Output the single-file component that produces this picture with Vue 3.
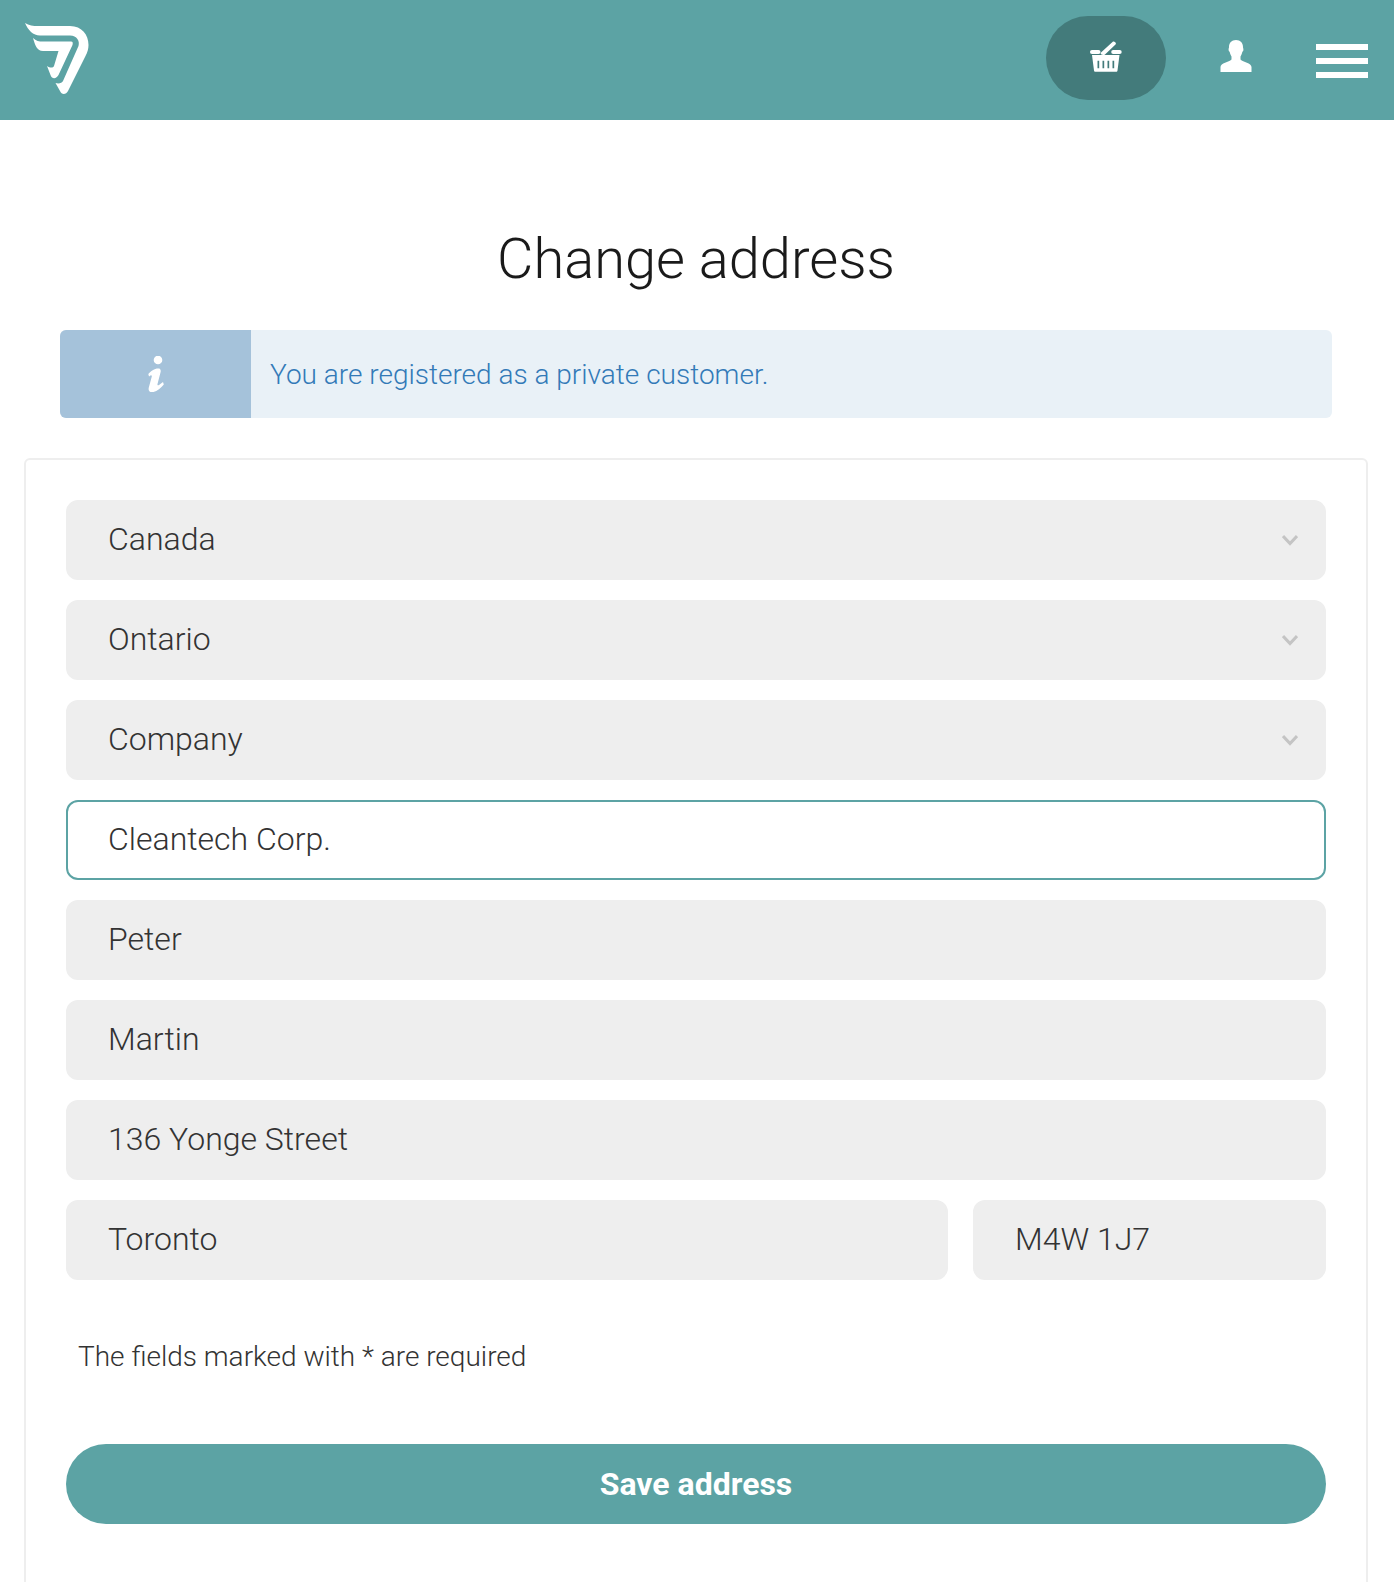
<template>
  <div class="page">
    <header class="topbar">
      <a class="logo" href="#" aria-label="Home">
        <svg width="64" height="72" viewBox="25 23 64 72">
          <path d="M25 23C29 25.500 33 26 38 26L70 26C82 26 88.500 35 88.500 45C88.500 49 87.500 52 85.500 56L68 91C66 95 61.500 95 60 91L55.500 83C59 84 62 83 63 81L78.500 46C80 41 77 35.500 70 35.500L40 35.500C33 35.500 28 30 25 23Z" />
          <path d="M33 38C36 41 39 41.500 43 41.500L71 41.500C73 41.500 73 43 72.500 45L58.500 75C56.500 79 52 79.500 50.500 75L47 66C50 68 53 68 54 66L58.500 51L43 51C37 51 35 45 33 38Z" />
        </svg>
      </a>
      <div class="actions">
        <button class="basket" aria-label="Basket">
          <svg width="32" height="31" viewBox="0 0 32 31">
            <path d="M11 11.500L22.500 1C24 -.5 27 2 25.500 3.500L15 13.500C13 15 9.500 13 11 11.500Z" />
            <rect x="0" y="9" width="10.500" height="4" rx="2" />
            <rect x="21.200" y="9" width="10.500" height="4" rx="2" />
            <path fill-rule="evenodd" d="M2 14L29.500 14L27.500 29.500C27.400 30.300 27 30.800 26 30.800L5.500 30.800C4.600 30.800 4.100 30.300 4 29.500ZM7.500 19.700L7.500 27.300L9.200 27.300L9.200 19.700ZM12.500 19.700L12.500 27.300L14.200 27.300L14.200 19.700ZM17.500 19.700L17.500 27.300L19.200 27.300L19.200 19.700ZM22.500 19.700L22.500 27.300L24.200 27.300L24.200 19.700Z" />
          </svg>
        </button>
        <button class="user" aria-label="Account">
          <svg width="32" height="32" viewBox="0 0 32 32">
            <path d="M16 0C20.500 0 23 3 23 7C23 8 23.500 8.500 23.400 10C23.300 11 22.700 11.500 22.300 12C21.800 14 21 15.500 20.500 16.500L20.500 19.500C23 22 31.500 23 31.500 27L31.500 32L.5 32L.5 27C.5 23 9 22 11.500 19.500L11.500 16.500C11 15.500 10.200 14 9.700 12C9.300 11.500 8.700 11 8.600 10C8.500 8.500 9 8 9 7C9 3 11.500 0 16 0Z" />
          </svg>
        </button>
        <button class="menu" aria-label="Menu">
          <span></span><span></span><span></span>
        </button>
      </div>
    </header>

    <main>
      <h1>Change address</h1>

      <div class="notice">
        <div class="notice-icon">
          <svg width="16" height="36" viewBox="0 0 16 36">
            <circle cx="10" cy="4" r="4.300" />
            <path d="M.3 18C3 15 7 12 11 12.500C12.800 12.800 13 15 12.500 16.500L9.500 28C9.200 29.500 10.300 29.500 11 29L15 26L15.800 28.500C12.500 32.500 8 36.200 3.800 36.200C1 36.200 .2 34 .8 31.500L3.800 20.500C4 19.500 3.200 19 2.500 19.500L1 20.500Z" />
          </svg>
        </div>
        <p>You are registered as a private customer.</p>
      </div>

      <form class="card" @submit.prevent>
        <div v-for="item in selects" :key="item" class="field select">
          <span>{{ item }}</span>
          <svg width="16" height="12" viewBox="0 0 16 12">
            <path d="M1 2L8 9.500L15 2" />
          </svg>
        </div>

        <input class="field active" v-model="company" />
        <input v-for="item in fields" :key="item.id" class="field" v-model="item.value" />

        <div class="row">
          <input class="field" v-model="city" />
          <input class="field zip" v-model="zip" />
        </div>

        <p class="hint">The fields marked with * are required</p>

        <button class="save">Save address</button>
      </form>
    </main>
  </div>
</template>

<script setup>
import { ref } from 'vue'

const selects = ['Canada', 'Ontario', 'Company']

const company = ref('Cleantech Corp.')
const city = ref('Toronto')
const zip = ref('M4W 1J7')

const fields = ref([
  { id: 'first', value: 'Peter' },
  { id: 'last', value: 'Martin' },
  { id: 'street', value: '136 Yonge Street' }
])
</script>

<style>
body {
  background: #fff;
}
</style>

<style scoped>
.page {
  height: 1582px;
  overflow: hidden;
  font-family: Roboto, "Liberation Sans", sans-serif;
  color: #333;
}

.topbar {
  height: 120px;
  background: #5ca3a4;
  display: flex;
  align-items: center;
  justify-content: space-between;
  padding: 0 26px 0 25px;
  box-sizing: border-box;
}

.logo {
  display: block;
  height: 72px;
  margin-top: -2px;
}

.logo svg,
.actions svg {
  display: block;
}

.logo path,
.actions path,
.actions rect {
  fill: #fff;
}

.actions {
  display: flex;
  align-items: center;
  margin-top: -4px;
}

.actions button {
  border: none;
  background: none;
  padding: 0;
  cursor: pointer;
}

.actions .basket {
  width: 120px;
  height: 84px;
  border-radius: 42px;
  padding-bottom: 3px;
  display: flex;
  align-items: center;
  justify-content: center;
  background: #437b7b;
}

.user {
  margin-left: 54px;
  margin-top: -4px;
}

.menu {
  width: 52px;
  margin-left: 64px;
  display: flex;
  flex-direction: column;
  gap: 8px;
  margin-top: 6px;
}

.menu span {
  display: block;
  height: 6px;
  background: #fff;
}

h1 {
  margin: 0;
  padding: 101px 2px 0 0;
  height: 109px;
  font-size: 56px;
  font-weight: 300;
  line-height: 76px;
  text-align: center;
  color: #1a1a1a;
}

.notice {
  margin: 0 62px 0 60px;
  height: 88px;
  display: flex;
  align-items: stretch;
  background: #e9f1f7;
  border-radius: 6px;
  overflow: hidden;
}

.notice-icon {
  width: 191px;
  background: #a5c2da;
  display: flex;
  align-items: center;
  justify-content: center;
}

.notice-icon svg {
  fill: #fff;
}

.notice p {
  margin: 0 0 0 19px;
  font-size: 28px;
  font-weight: 300;
  line-height: 90px;
  color: #337ab7;
}

.card {
  margin: 40px 26px 0 24px;
  padding: 40px 40px 80px;
  border: 2px solid #eee;
  border-radius: 6px;
  display: flex;
  flex-direction: column;
  gap: 20px;
}

.field {
  height: 80px;
  box-sizing: border-box;
  width: 100%;
  padding: 0 40px 2px;
  background: #eee;
  border: 2px solid #eee;
  border-radius: 12px;
  font-family: inherit;
  font-size: 32px;
  font-weight: 300;
  color: #333;
  outline: none;
}

.select {
  display: flex;
  align-items: center;
  justify-content: space-between;
  padding-right: 26px;
}

.select svg {
  fill: none;
  stroke: #c4c4c4;
  stroke-width: 3;
  margin-top: 2px;
}

.active {
  background: #fff;
  border-color: #5ca3a4;
}

.row {
  display: flex;
  gap: 25px;
}

.zip {
  width: 353px;
  flex-shrink: 0;
}

.hint {
  margin: 40px 0 0 12px;
  font-size: 28px;
  font-weight: 300;
  line-height: 34px;
  color: #333;
}

.save {
  margin-top: 50px;
  height: 80px;
  border: none;
  border-radius: 40px;
  background: #5ca3a4;
  color: #fff;
  font-family: inherit;
  font-size: 32px;
  font-weight: 700;
  cursor: pointer;
}
</style>
